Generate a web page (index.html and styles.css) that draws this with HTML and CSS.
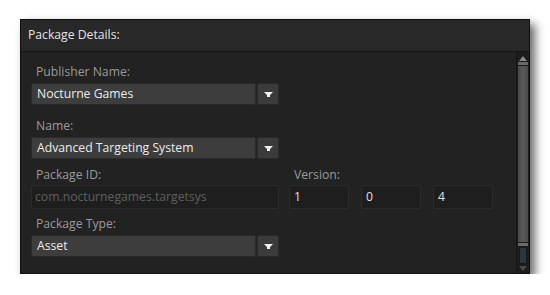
FILE: index.html
```html
<!DOCTYPE html>
<html>
<head>
<meta charset="utf-8">
<link rel="stylesheet" href="styles.css">
</head>
<body>
<div class="window">
  <div class="header">Package Details:</div>
  <div class="main">
    <div class="content">
      <div class="label">Publisher Name:</div>
      <div class="dropdown">
        <div class="dd-value">Nocturne Games</div>
        <div class="dd-btn"><svg width="9" height="5" viewBox="0 0 9 5"><polygon points="0,0 9,0 6,3 6,5 3,5 3,3" fill="#f0f0f0"/></svg></div>
      </div>
      <div class="label">Name:</div>
      <div class="dropdown tight">
        <div class="dd-value">Advanced Targeting System</div>
        <div class="dd-btn"><svg width="9" height="5" viewBox="0 0 9 5"><polygon points="0,0 9,0 6,3 6,5 3,5 3,3" fill="#f0f0f0"/></svg></div>
      </div>
      <div class="idrow">
        <div class="idcol">
          <div class="label">Package ID:</div>
          <div class="input disabled">com.nocturnegames.targetsys</div>
        </div>
        <div class="vercol">
          <div class="label">Version:</div>
          <div class="verinputs">
            <div class="input ver">1</div>
            <div class="input ver">0</div>
            <div class="input ver">4</div>
          </div>
        </div>
      </div>
      <div class="label">Package Type:</div>
      <div class="dropdown">
        <div class="dd-value">Asset</div>
        <div class="dd-btn"><svg width="9" height="5" viewBox="0 0 9 5"><polygon points="0,0 9,0 6,3 6,5 3,5 3,3" fill="#f0f0f0"/></svg></div>
      </div>
    </div>
    <div class="scrollbar">
      <div class="sb-arrow"><svg width="8" height="5" viewBox="0 0 8 5"><polygon points="4,0 8,5 0,5" fill="#8a8a8a"/></svg></div>
      <div class="sb-cap"></div>
      <div class="sb-thumb"></div>
      <div class="sb-cap"></div>
      <div class="sb-track"></div>
      <div class="sb-arrow down"><svg width="8" height="5" viewBox="0 0 8 5"><polygon points="0,0 8,0 4,5" fill="#4a4a4a"/></svg></div>
    </div>
  </div>
</div>
</body>
</html>
```
FILE: styles.css
```css
html, body {
  margin: 0;
  padding: 0;
  background: #ffffff;
}
body {
  font-family: "Open Sans", "Noto Sans", sans-serif;
  font-size: 12.2px;
  padding: 19px 0 0 20px;
}
.window {
  width: 508px;
  height: 253px;
  background: #222222;
  border: 1px solid #111111;
  box-shadow: 5px 5px 9px rgba(0, 0, 0, 0.6);
  display: flex;
  flex-direction: column;
}
.header {
  height: 31px;
  line-height: 30px;
  background: #282828;
  border-bottom: 1px solid #141414;
  color: #e4e4e4;
  padding-left: 7px;
}
.main {
  flex: 1;
  display: flex;
}
.content {
  flex: 1;
  padding: 12px 0 0 10px;
}
.label {
  color: #9a9a9a;
  height: 16px;
  line-height: 16px;
  padding-left: 5px;
  margin-bottom: 3px;
}
.dropdown {
  width: 248px;
  height: 22px;
  display: flex;
  gap: 1px;
  margin-bottom: 13px;
}
.dropdown.tight {
  margin-bottom: 8px;
}
.dd-value {
  flex: 1;
  background: #3d3d3d;
  border: 1px solid #2b2b2b;
  border-radius: 2px;
  color: #ececec;
  line-height: 20px;
  padding-left: 5px;
}
.dd-btn {
  width: 20px;
  background: #3b3b3b;
  border: 1px solid #2b2b2b;
  border-radius: 2px;
  display: flex;
  align-items: center;
  justify-content: center;
}
.dd-btn svg {
  margin-top: 1px;
}
.idrow {
  display: flex;
  gap: 10px;
  margin-bottom: 7px;
}
.idcol .label,
.vercol .label {
  margin-bottom: 2px;
}
.input {
  height: 24px;
  line-height: 22px;
  background: #1e1e1e;
  border: 1px solid #2c2c2c;
  border-radius: 2px;
  color: #e0e0e0;
  padding-left: 3px;
  box-sizing: border-box;
}
.input.disabled {
  width: 248px;
  color: #5e5e5e;
}
.verinputs {
  display: flex;
  gap: 12px;
}
.input.ver {
  width: 60px;
  padding-left: 4px;
}
.scrollbar {
  width: 12px;
  border-left: 1px solid #151515;
  background: #1c1c1c;
  display: flex;
  flex-direction: column;
}
.sb-arrow {
  height: 7px;
  display: flex;
  align-items: flex-end;
  justify-content: center;
  padding-top: 2px;
}
.sb-arrow.down {
  align-items: flex-start;
  padding-top: 2px;
  height: 6px;
  margin-bottom: 1px;
}
.sb-cap {
  height: 3px;
  margin: 1px 1px 0 1px;
  background: #6a6a6a;
}
.sb-thumb {
  height: 176px;
  margin: 1px 1px 0 1px;
  background: linear-gradient(to right, #484848, #5a5a5a 50%, #4a4a4a);
}
.sb-track {
  flex: 1;
  margin: 1px 2px 0 2px;
  background: #2f353a;
  border: 1px solid #1a1a1a;
}
```
